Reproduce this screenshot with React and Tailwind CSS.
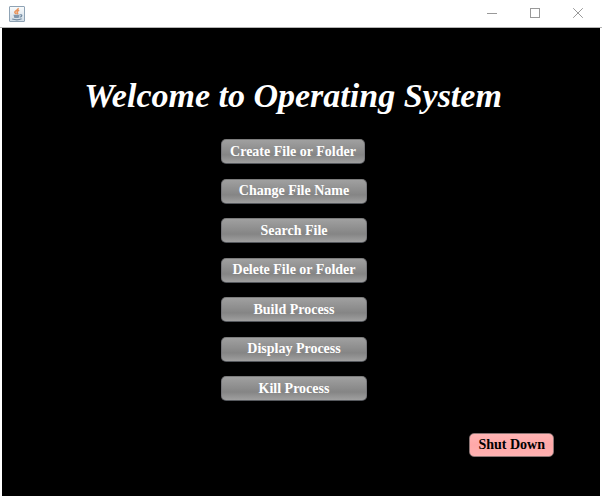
const ACTIONS = [
  { label: 'Create File or Folder', width: 'w-36' },
  { label: 'Change File Name', width: 'w-full' },
  { label: 'Search File', width: 'w-full' },
  { label: 'Delete File or Folder', width: 'w-full' },
  { label: 'Build Process', width: 'w-full' },
  { label: 'Display Process', width: 'w-full' },
  { label: 'Kill Process', width: 'w-full' },
];

function JavaIcon() {
  return (
    <svg width="16" height="16" viewBox="0 0 16 16" aria-hidden="true">
      <defs>
        <linearGradient id="tile" x1="0" y1="0" x2="0" y2="1">
          <stop offset="0" stopColor="#fafcfd" />
          <stop offset="1" stopColor="#cfdbe5" />
        </linearGradient>
      </defs>
      <rect x="0.5" y="0.5" width="15" height="15" rx="0.5" fill="url(#tile)" stroke="#8fa3b5" />
      <path d="M9.2 2C9.8 4 5.4 4.6 5.8 6.3C6 7.2 7.2 7.6 7.2 8.2M10.2 4.2C8 5.2 7.6 6 8.4 6.8C9 7.4 8.6 7.8 8.2 8.2" fill="none" stroke="#e8935a" strokeWidth="1.5" />
      <path d="M4.4 8.8H10.6L9.6 12H5.4Z" fill="#8197ac" />
      <path d="M3.2 13C6 13.9 10.4 13.8 12.6 12.8M10.6 9C13.6 8 13.6 10.6 10.6 11.2" fill="none" stroke="#7189a0" strokeWidth="1.2" />
    </svg>
  );
}

function WindowButton({ label, children }) {
  return (
    <button type="button" aria-label={label} className="flex h-full w-[43px] items-center justify-center text-[#999999]">
      <svg width="10" height="10" viewBox="0 0 10 10" fill="none" stroke="currentColor" aria-hidden="true">
        {children}
      </svg>
    </button>
  );
}

export default function App() {
  return (
    <div className="flex min-h-screen flex-col bg-white pb-px font-['Liberation_Serif',serif]">
      <header className="flex h-7 items-center justify-between border-b border-[#b4b4b4] pl-[9px] pr-[3px]">
        <JavaIcon />
        <div className="flex h-[26px] self-start">
          <WindowButton label="Minimize">
            <path d="M0 5.5H10" />
          </WindowButton>
          <WindowButton label="Maximize">
            <rect x="0.5" y="0.5" width="9" height="9" />
          </WindowButton>
          <WindowButton label="Close">
            <path d="M0.2 0.2L9.8 9.8M9.8 0.2L0.2 9.8" />
          </WindowButton>
        </div>
      </header>

      <main className="mx-[2px] flex flex-1 flex-col items-center bg-black pt-12">
        <h1 className="pr-4 text-[34px] leading-10 font-bold italic text-white">Welcome to Operating System</h1>

        <div className="mt-[23px] mr-[14px] flex h-[262px] w-[146px] flex-col justify-between">
          {ACTIONS.map(({ label, width }) => (
            <button
              key={label}
              type="button"
              className={`${width} h-[25px] rounded-[5px] border border-t-[#7c7c7c] border-x-[#77777b] border-b-[#55585d] bg-linear-to-b from-[#a0a0a0] via-[#858585] via-65% to-[#a0a0a0] text-sm leading-5 font-bold whitespace-nowrap text-white`}
            >
              {label}
            </button>
          ))}
        </div>

        <button
          type="button"
          className="mt-8 mr-[46px] h-6 self-end rounded-[5px] border border-[#8c7474] bg-linear-to-b from-[#ffb4b4] via-[#ffa8a8] to-[#ffb2b2] px-2 text-sm leading-5 font-bold text-black"
        >
          Shut Down
        </button>
      </main>
    </div>
  );
}
